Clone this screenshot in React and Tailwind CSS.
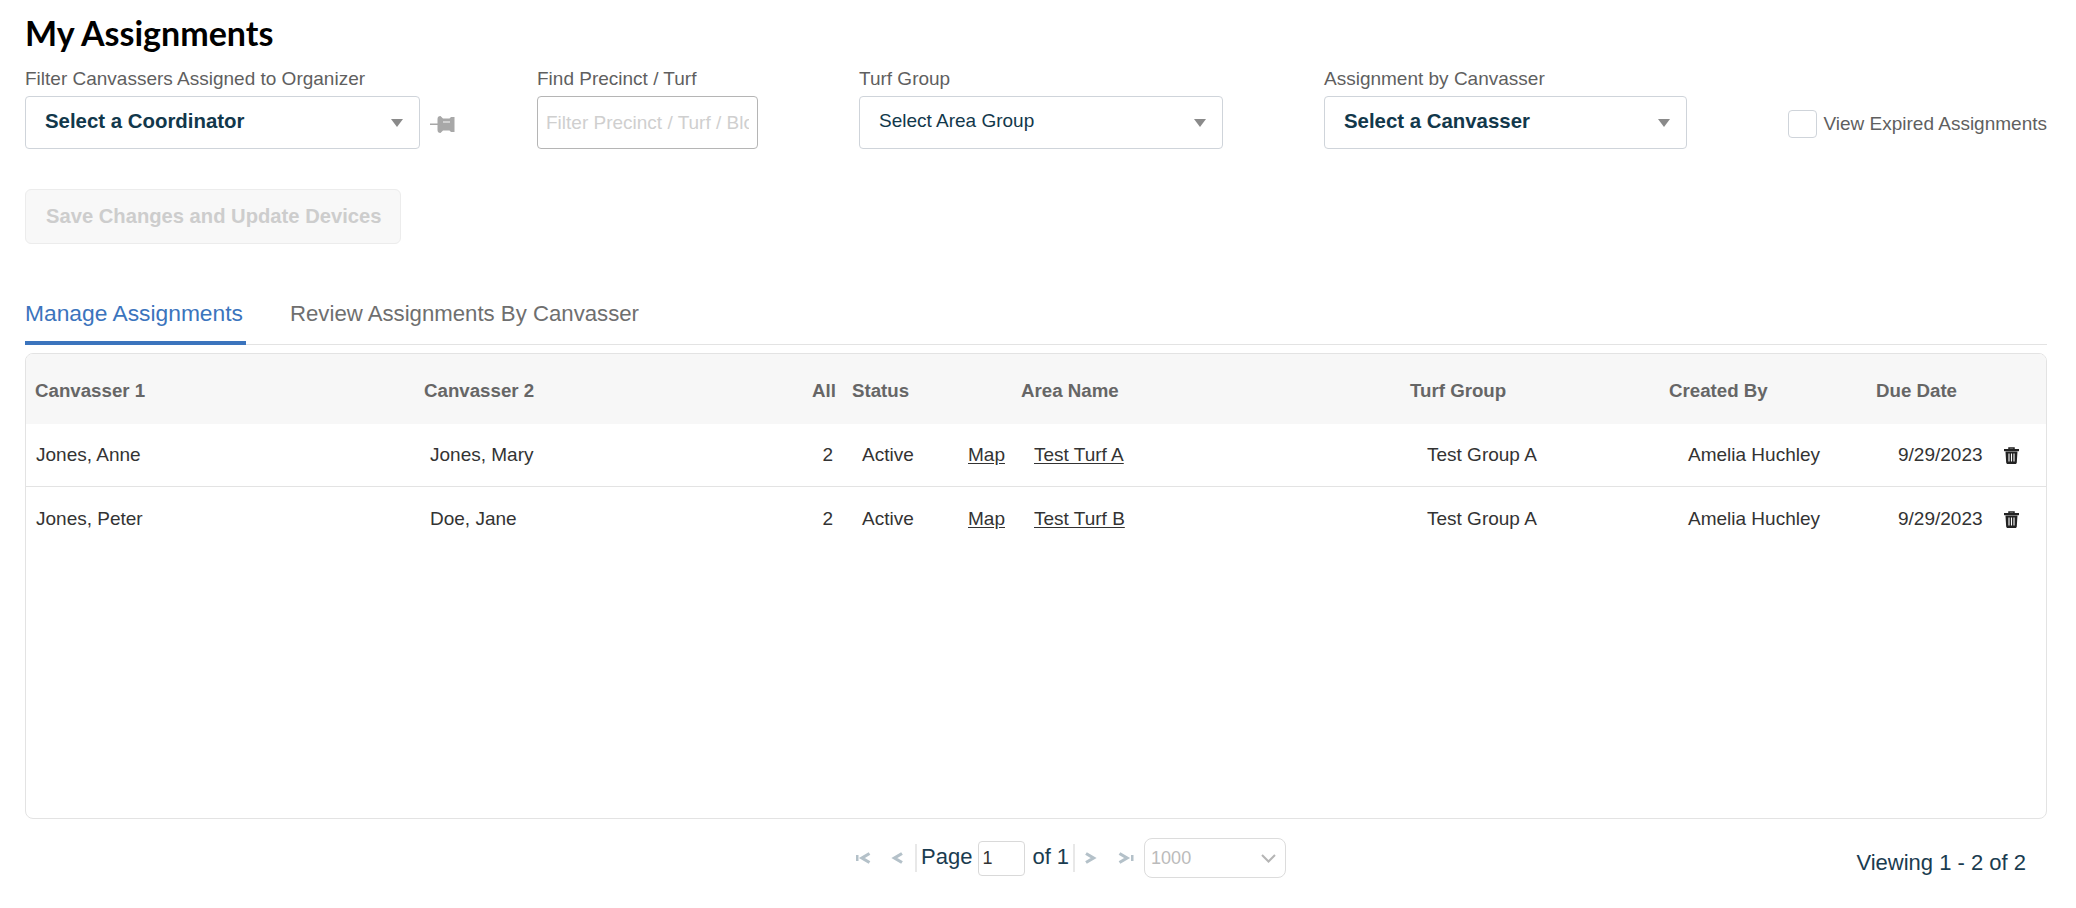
const rows = [
  { c1: "Jones, Anne", c2: "Jones, Mary", area: "Test Turf A" },
  { c1: "Jones, Peter", c2: "Doe, Jane", area: "Test Turf B" },
];

const gridCols =
  "grid grid-cols-[394px_370px_53px_117px_55px_385px_260px_210px_125px_1fr]";

const Caret = () => (
  <svg width="12" height="8" viewBox="0 0 12 8" className="shrink-0">
    <path d="M0 0h12L6 8z" fill="#8a8a8a" />
  </svg>
);

const FilterSelect = ({ label, text, bold, width, gap }) => (
  <div className={`${width} ${gap} shrink-0`}>
    <label className="block h-[22px] mb-[6px] text-[19px] leading-[22px] text-[#5f5f5f] whitespace-nowrap">
      {label}
    </label>
    <div className="h-[53px] bg-white border border-[#cfd4da] rounded-[4px] flex items-center justify-between pl-[19px] pr-[16px] text-[#12384b]">
      <span className={`leading-[24px] -mt-[3px] ${bold ? "font-bold text-[20.4px]" : "text-[19px]"}`}>
        {text}
      </span>
      <Caret />
    </div>
  </div>
);

const PinIcon = () => (
  <svg width="25" height="17" viewBox="0 0 25 17" className="ml-[10px] mt-[48px] shrink-0">
    <path
      d="M0 7.500h7.500V3C7.500 1 8.500 0 10.500 0L13 2.500h6.500L21 1h3.500v15H21l-1.500-1.500H13L10.500 17C8.500 17 7.500 16 7.500 14V9H0z"
      fill="#a8a8a8"
    />
    <path d="M13 6h7" stroke="#dedede" strokeWidth="1.500" />
  </svg>
);

const TrashIcon = () => (
  <svg width="15" height="17" viewBox="0 0 15 17">
    <path d="M5 2V1h5v1" fill="none" stroke="#222" strokeWidth="1.500" />
    <rect x="0" y="2" width="15" height="2.200" fill="#222" />
    <path
      d="M1.500 4.500h12l-.7 11c-.1.9-.6 1.500-1.500 1.500H3.700c-.9 0-1.400-.6-1.500-1.500z"
      fill="#222"
    />
    <path d="M5 6.500v8M7.500 6.500v8M10 6.500v8" stroke="#fff" strokeWidth="1.100" />
  </svg>
);

const PagerIcon = ({ d, bar, className }) => (
  <svg width="16" height="12" viewBox="0 0 16 12" className={className}>
    <path d={d} fill="none" stroke="#b4c1c9" strokeWidth="3.200" />
    {bar !== undefined && <rect x={bar} y="3" width="2.500" height="6" fill="#b4c1c9" />}
  </svg>
);

const Cell = ({ className = "", children }) => (
  <div className={`flex items-center min-w-0 whitespace-nowrap ${className}`}>{children}</div>
);

export default function App() {
  return (
    <div className="h-[908px] w-[2076px] overflow-hidden bg-white pl-[25px] pr-[29px] font-['Liberation_Sans',Arial,sans-serif]">
      <h1 className="pt-[11px] h-[68px] text-[34px] leading-[44px] font-bold text-black font-['Lato',sans-serif]">
        My Assignments
      </h1>

      <div className="flex items-start">
        <FilterSelect
          label="Filter Canvassers Assigned to Organizer"
          text="Select a Coordinator"
          bold
          width="w-[395px]"
        />
        <PinIcon />
        <div className="w-[221px] ml-[82px] shrink-0">
          <label className="block h-[22px] mb-[6px] text-[19px] leading-[22px] text-[#5f5f5f]">
            Find Precinct / Turf
          </label>
          <input
            placeholder="Filter Precinct / Turf / Block"
            className="w-full h-[53px] px-[8px] border border-[#b5b5b5] rounded-[4px] text-[19px] outline-none placeholder:text-[#cfcfcf]"
          />
        </div>
        <FilterSelect
          label="Turf Group"
          text="Select Area Group"
          width="w-[364px]"
          gap="ml-[101px]"
        />
        <FilterSelect
          label="Assignment by Canvasser"
          text="Select a Canvasser"
          bold
          width="w-[363px]"
          gap="ml-[101px]"
        />
        <div className="ml-auto mt-[42px] flex items-center gap-[6px]">
          <span className="w-[29px] h-[28px] border border-[#cfd4da] rounded-[4px] bg-white" />
          <span className="text-[19px] leading-[24px] text-[#5f5f5f] whitespace-nowrap">
            View Expired Assignments
          </span>
        </div>
      </div>

      <button
        disabled
        className="block mt-[40px] w-[376px] h-[55px] bg-[#f8f8f8] border border-[#ececec] rounded-[6px] text-left pl-[20px] pb-[1px] text-[20.2px] font-bold text-[#cdcdcd]"
      >
        Save Changes and Update Devices
      </button>

      <div className="mt-[40px] h-[61px] flex items-start border-b border-[#e3e3e3]">
        <div className="w-[221px] h-[61px] border-b-[4px] border-[#3b74bd] pt-[16px] text-[22.800px] leading-[26px] text-[#3b74bd] whitespace-nowrap">
          Manage Assignments
        </div>
        <div className="ml-[44px] pt-[17px] text-[22.200px] leading-[26px] text-[#6f6f6f] whitespace-nowrap">
          Review Assignments By Canvasser
        </div>
      </div>

      <div className="mt-[8px] h-[466px] border border-[#e3e3e3] rounded-[8px] overflow-hidden">
        <div className={`${gridCols} h-[70px] pt-[5px] bg-[#f7f7f7] text-[18.700px] font-bold text-[#666]`}>
          <Cell className="pl-[9px]">Canvasser 1</Cell>
          <Cell className="pl-[4px]">Canvasser 2</Cell>
          <Cell className="justify-end pr-[7px]">All</Cell>
          <Cell className="pl-[9px]">Status</Cell>
          <Cell />
          <Cell className="pl-[6px]">Area Name</Cell>
          <Cell className="pl-[10px]">Turf Group</Cell>
          <Cell className="pl-[9px]">Created By</Cell>
          <Cell className="pl-[6px]">Due Date</Cell>
          <Cell />
        </div>
        {rows.map((row, i) => (
          <div
            key={row.area}
            className={`${gridCols} text-[19px] text-[#333] ${i === 0 ? "h-[63px] border-b border-[#e3e3e3]" : "h-[64px]"}`}
          >
            <Cell className="pl-[10px]">{row.c1}</Cell>
            <Cell className="pl-[10px]">{row.c2}</Cell>
            <Cell className="justify-end pr-[10px]">2</Cell>
            <Cell className="pl-[19px]">Active</Cell>
            <Cell className="pl-[8px]">
              <a className="underline underline-offset-2">Map</a>
            </Cell>
            <Cell className="pl-[19px]">
              <a className="underline underline-offset-2">{row.area}</a>
            </Cell>
            <Cell className="pl-[27px]">Test Group A</Cell>
            <Cell className="pl-[28px]">Amelia Huchley</Cell>
            <Cell className="pl-[28px]">9/29/2023</Cell>
            <Cell className="pl-[9px]">
              <TrashIcon />
            </Cell>
          </div>
        ))}
      </div>

      <div className="mt-[19px] flex items-start text-[#1a3c50]">
        <div className="ml-[830px] h-[40px] flex items-center">
          <PagerIcon d="M14.500 1.500L7 6l7.500 4.500" bar={1} className="" />
          <PagerIcon d="M11 1.500L3.500 6 11 10.500" className="ml-[20px]" />
          <span className="ml-[8px] h-[28px] w-[2px] bg-[#e8e8e8]" />
          <span className="ml-[4px] -mt-[3px] text-[22px]">Page</span>
          <input
            defaultValue="1"
            className="ml-[6px] w-[47px] h-[35px] border border-[#d9d9d9] rounded-[4px] px-[3px] text-[18px] text-[#333] outline-none"
          />
          <span className="ml-[7px] -mt-[3px] text-[22px]">of 1</span>
          <span className="ml-[4px] h-[28px] w-[2px] bg-[#e8e8e8]" />
          <PagerIcon d="M5 1.500L12.500 6 5 10.500" className="ml-[6px]" />
          <PagerIcon d="M1.500 1.500L9 6l-7.500 4.500" bar={13} className="ml-[21px]" />
          <div className="ml-[10px] w-[142px] h-[40px] border border-[#dcdcdc] rounded-[8px] flex items-center justify-between pl-[6px] pr-[9px] text-[18px] text-[#bbb]">
            1000
            <svg width="15" height="9" viewBox="0 0 15 9">
              <path d="M1 1l6.500 6.500L14 1" fill="none" stroke="#b5b5b5" strokeWidth="2" />
            </svg>
          </div>
        </div>
        <span className="ml-auto mr-[21px] mt-[11px] text-[22px] leading-[28px] whitespace-nowrap">
          Viewing 1 - 2 of 2
        </span>
      </div>
    </div>
  );
}
